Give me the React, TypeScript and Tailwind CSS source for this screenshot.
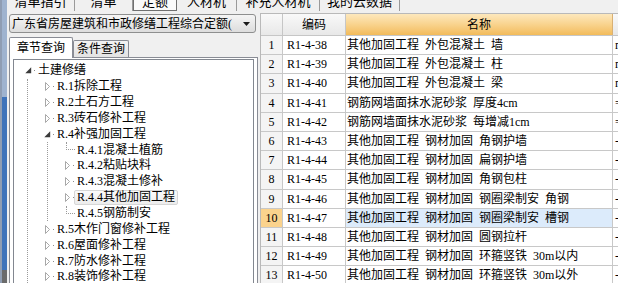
import React from 'react';

const Hollow = () => (
  <svg width="6" height="9" viewBox="0 0 6 9" className="ml-[1px] shrink-0">
    <path d="M0.5 0.5 L4.5 4.5 L0.5 8.5 Z" fill="#ffffff" stroke="#a8a8a8" strokeWidth="1" />
  </svg>
);

const Filled = () => (
  <svg width="7" height="7" viewBox="0 0 7 7" className="shrink-0">
    <path d="M6.2 0.3 L6.2 6.2 L0.3 6.2 Z" fill="#3a3a3a" />
  </svg>
);

type RowProps = { open?: boolean; text: string; selected?: boolean; indent: string };

function TreeRow({ open, text, selected, indent }: RowProps) {
  return (
    <div className={`flex items-center h-[15.85px] whitespace-nowrap ${indent}`}>
      <span className="w-[8px] h-[9px] flex items-center shrink-0">{open ? <Filled /> : <Hollow />}</span>
      <span className="ml-[1px] w-[1px] h-[1px] bg-[#8c8c8c] shrink-0" />
      <span
        className={`px-[2px] border rounded-[2px] leading-[13px] ${
          selected ? 'border-[#d6d6d6] bg-linear-to-b from-[#fbfbfb] to-[#ececec]' : 'border-transparent'
        }`}
      >
        {text}
      </span>
    </div>
  );
}

function LeafRow({ text }: { text: string }) {
  return (
    <div className="flex items-center h-[15.85px] whitespace-nowrap ml-[18px]">
      <span className="self-start w-[9px] h-[8px] border-l border-b border-dotted border-[#9a9a9a] shrink-0" />
      <span className="ml-[-1px] px-[2px] border border-transparent leading-[13px]">{text}</span>
    </div>
  );
}

const rows: [string, string, string][] = [
  ['R1-4-38', '其他加固工程  外包混凝土  墙', 'm3'],
  ['R1-4-39', '其他加固工程  外包混凝土  柱', 'm3'],
  ['R1-4-40', '其他加固工程  外包混凝土  梁', 'm3'],
  ['R1-4-41', '钢筋网墙面抹水泥砂浆  厚度4cm', '='],
  ['R1-4-42', '钢筋网墙面抹水泥砂浆  每增减1cm', '='],
  ['R1-4-43', '其他加固工程  钢材加固  角钢护墙', '-'],
  ['R1-4-44', '其他加固工程  钢材加固  扁钢护墙', '-'],
  ['R1-4-45', '其他加固工程  钢材加固  角钢包柱', '-'],
  ['R1-4-46', '其他加固工程  钢材加固  钢圈梁制安  角钢', '-'],
  ['R1-4-47', '其他加固工程  钢材加固  钢圈梁制安  槽钢', '-'],
  ['R1-4-48', '其他加固工程  钢材加固  圆钢拉杆', '-'],
  ['R1-4-49', '其他加固工程  钢材加固  环箍竖铁  30m以内', '-'],
  ['R1-4-50', '其他加固工程  钢材加固  环箍竖铁  30m以外', '-'],
];

export default function App() {
  return (
    <div className="w-[618px] h-[283px] overflow-hidden flex bg-[#f0f0f0] text-black text-[12px] leading-[14px] font-['Liberation_Serif','Noto_Sans_CJK_SC',serif]">
      {/* left window strip */}
      <div className="w-[7px] shrink-0 flex flex-col border-l-2 border-[#8f9db3]">
        <div className="h-[97px] bg-[#9fb3cf]" />
        <div className="h-[173px] bg-[#3f73ba]" />
        <div className="flex-1 bg-[#6b6b6b]" />
      </div>

      <div className="flex-1 flex flex-col min-w-0">
        {/* top tabs (clipped) */}
        <div className="h-[11px] shrink-0 flex overflow-hidden text-[13px] leading-[13px]">
          <div className="w-[68px] flex justify-center border-r border-[#9a9a9a]"><span className="mt-[-5px]">清单指引</span></div>
          <div className="w-[58px] flex justify-center border-r border-[#9a9a9a]"><span className="mt-[-5px]">清单</span></div>
          <div className="w-[44px] flex justify-center border border-t-0 border-[#707070] bg-[#fafafa]"><span className="mt-[-5px]">定额</span></div>
          <div className="w-[60px] flex justify-center border-r border-[#9a9a9a]"><span className="mt-[-5px]">人材机</span></div>
          <div className="w-[83px] flex justify-center border-r border-[#9a9a9a]"><span className="mt-[-5px]">补充人材机</span></div>
          <div className="w-[80px] flex justify-center border-r border-[#9a9a9a]"><span className="mt-[-5px]">我的云数据</span></div>
        </div>

        <div className="flex-1 flex min-h-0">
          {/* left panel */}
          <div className="w-[251px] shrink-0 pl-[2px] pt-[3px] flex flex-col">
            <div className="w-[247px] h-[19px] shrink-0 flex items-center rounded-[3px] border border-[#8e8f8f] bg-linear-to-b from-[#f5f5f5] to-[#dddddd] pl-[2px] pr-[5px]">
              <span className="flex-1 overflow-hidden whitespace-nowrap">广东省房屋建筑和市政修缮工程综合定额(</span>
              <svg width="7" height="4" viewBox="0 0 7 4" className="ml-[6px] shrink-0">
                <path d="M0 0 L7 0 L3.5 4 Z" fill="#1a1a1a" />
              </svg>
            </div>

            <div className="mt-[4px] h-[20px] shrink-0 flex items-end relative z-10">
              <div className="w-[64px] h-[21px] mb-[-1px] flex items-center justify-center bg-white border border-b-0 border-[#898c95] rounded-t-[2px]">
                章节查询
              </div>
              <div className="w-[56px] h-[17px] flex items-center justify-center bg-linear-to-b from-[#f3f3f3] to-[#e3e3e3] border border-b-0 border-[#898c95] rounded-t-[2px]">
                条件查询
              </div>
            </div>

            <div className="w-[249px] flex-1 min-h-0 bg-white border border-b-0 border-[#898c95] px-[3px] pt-[1px] flex flex-col">
              <div className="flex-1 min-h-0 overflow-hidden border border-b-0 border-[#828790] bg-white pt-[3px]">
                <TreeRow open text="土建修缮" indent="ml-[11px]" />
                <div className="ml-[13px] border-l border-dotted border-[#9a9a9a]">
                  <TreeRow text="R.1拆除工程" indent="ml-[16px]" />
                  <TreeRow text="R.2土石方工程" indent="ml-[16px]" />
                  <TreeRow text="R.3砖石修补工程" indent="ml-[16px]" />
                  <TreeRow open text="R.4补强加固工程" indent="ml-[16px]" />
                  <div className="ml-[19px] border-l border-dotted border-[#9a9a9a]">
                    <LeafRow text="R.4.1混凝土植筋" />
                    <TreeRow text="R.4.2粘贴块料" indent="ml-[16px]" />
                    <TreeRow text="R.4.3混凝土修补" indent="ml-[16px]" />
                    <TreeRow selected text="R.4.4其他加固工程" indent="ml-[16px]" />
                    <LeafRow text="R.4.5钢筋制安" />
                  </div>
                  <TreeRow text="R.5木作门窗修补工程" indent="ml-[16px]" />
                  <TreeRow text="R.6屋面修补工程" indent="ml-[16px]" />
                  <TreeRow text="R.7防水修补工程" indent="ml-[16px]" />
                  <TreeRow text="R.8装饰修补工程" indent="ml-[16px]" />
                </div>
              </div>
            </div>
          </div>

          <div className="w-[2px] shrink-0" />

          {/* grid */}
          <div className="flex-1 min-w-0 mt-[2px] border-t border-l border-[#b9b9b9] bg-white overflow-hidden">
            <div className="flex h-[22px] border-b border-[#c6c6c6]">
              <div className="w-[22px] shrink-0 border-r border-[#c6c6c6] bg-linear-to-b from-[#f9f9f9] to-[#e8e8e8]" />
              <div className="w-[63px] shrink-0 border-r border-[#c6c6c6] bg-linear-to-b from-[#f9f9f9] to-[#e8e8e8] flex items-center justify-center">
                编码
              </div>
              <div className="w-[267px] shrink-0 border-r border-[#d9b073] bg-linear-to-b from-[#fde8bd] via-[#f9d38d] to-[#f2bb5a] flex items-center justify-center">
                名称
              </div>
              <div className="flex-1 bg-linear-to-b from-[#f9f9f9] to-[#e8e8e8]" />
            </div>
            {rows.map(([code, name, unit], i) => {
              const sel = i === 9;
              return (
                <div key={code} className="flex h-[19.2px] border-b border-[#c8c8c8] whitespace-nowrap">
                  <div
                    className={`w-[22px] shrink-0 border-r border-[#c8c8c8] flex items-center justify-center ${
                      sel ? 'bg-[#fbd38d]' : 'bg-[#f4f4f4]'
                    }`}
                  >
                    {i + 1}
                  </div>
                  <div className="w-[63px] shrink-0 border-r border-[#c8c8c8] flex items-center pl-[4px]">{code}</div>
                  <div
                    className={`w-[267px] shrink-0 border-r border-[#c8c8c8] flex items-center pl-[1px] whitespace-pre overflow-hidden ${
                      sel ? 'bg-[#dcebfb]' : ''
                    }`}
                  >
                    {name}
                  </div>
                  <div className="flex-1 flex items-center pl-[2px] overflow-hidden">{unit}</div>
                </div>
              );
            })}
          </div>
        </div>
      </div>
    </div>
  );
}
